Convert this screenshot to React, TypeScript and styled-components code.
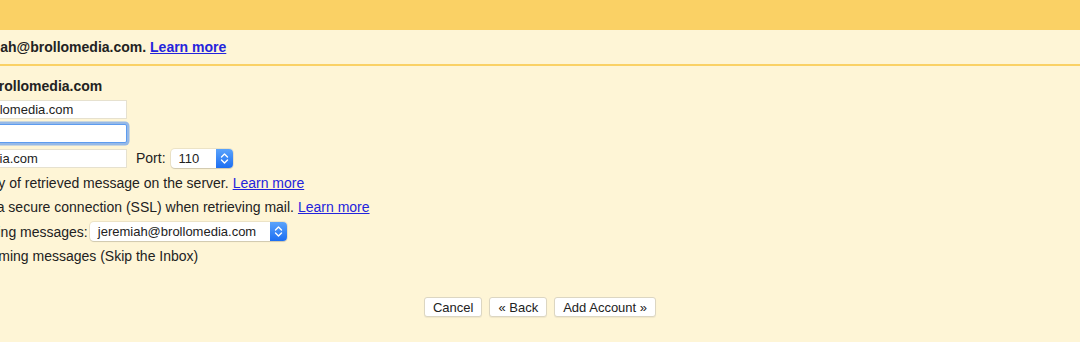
import styled, { createGlobalStyle } from "styled-components";

const GlobalStyle = createGlobalStyle`
  html, body {
    margin: 0;
    padding: 0;
    background: #fef5d6;
  }
  body {
    font-family: "Liberation Sans", Arial, sans-serif;
    color: #222;
  }
`;

const colors = {
  gold: "#fad165",
  cream: "#fef5d6",
  text: "#222222",
  link: "#2424dc",
};

const Chevrons = () => (
  <svg width="9" height="13" viewBox="0 0 9 13" fill="none">
    <path d="M1.5 5 L4.5 2 L7.5 5" stroke="#fff" strokeWidth="1.4" strokeLinecap="round" strokeLinejoin="round" />
    <path d="M1.5 8 L4.5 11 L7.5 8" stroke="#fff" strokeWidth="1.4" strokeLinecap="round" strokeLinejoin="round" />
  </svg>
);

const Select = ({ value, width, gap }: { value: string; width: number; gap: number }) => (
  <SelectBox $width={width} $gap={gap}>
    <span>{value}</span>
    <Stepper>
      <Chevrons />
    </Stepper>
  </SelectBox>
);

const App = () => {
  return (
    <Page>
      <GlobalStyle />
      <TopBand />

      <Notice>
        <NoticeText>
          jeremiah@brollomedia.com. <Link href="#">Learn more</Link>
        </NoticeText>
      </Notice>

      <Form>
        <Heading>jeremiah@brollomedia.com</Heading>

        <Label>Username:</Label>
        <Field>
          <Input defaultValue="jeremiah@brollomedia.com" />
        </Field>

        <Label>Password:</Label>
        <Field>
          <Input type="password" $focused />
        </Field>

        <Label>POP Server:</Label>
        <Field>
          <Input defaultValue="mail.brollomedia.com" />
          <Inline>Port:</Inline>
          <Select value="110" width={62} gap={0} />
        </Field>

        <Field>
          <Check type="checkbox" />
          Leave a copy of retrieved message on the server. <Link href="#">Learn more</Link>
        </Field>

        <Field>
          <Check type="checkbox" />
          Always use a secure connection (SSL) when retrieving mail. <Link href="#">Learn more</Link>
        </Field>

        <Field>
          <Check type="checkbox" />
          Label incoming messages:
          <Select value="jeremiah@brollomedia.com" width={197} gap={2} />
        </Field>

        <Field>
          <Check type="checkbox" />
          Archive incoming messages (Skip the Inbox)
        </Field>
      </Form>

      <Actions>
        <Button>Cancel</Button>
        <Button>« Back</Button>
        <Button>Add Account »</Button>
      </Actions>
    </Page>
  );
};

export default App;

const Page = styled.div`
  width: 1080px;
  height: 342px;
  overflow: hidden;
  background: ${colors.cream};
  font-size: 14px;
`;

const TopBand = styled.div`
  height: 30px;
  background: ${colors.gold};
`;

const Notice = styled.div`
  height: 34px;
  display: flex;
  align-items: center;
  border-bottom: 2px solid ${colors.gold};
  font-weight: bold;
`;

const NoticeText = styled.div`
  margin-left: -41px;
  white-space: nowrap;
`;

const Link = styled.a`
  color: ${colors.link};
  text-decoration: underline;
`;

const Form = styled.div`
  display: grid;
  grid-template-columns: 200px 900px;
  grid-template-rows: 22px;
  grid-auto-rows: 24.5px;
  margin: 9px 0 0 -291px;
`;

const Heading = styled.div`
  grid-column: 2;
  line-height: 22px;
  font-weight: bold;
  margin-left: 10px;
  white-space: nowrap;
`;

const Label = styled.div`
  display: flex;
  align-items: center;
  justify-content: flex-end;
  padding-right: 8px;
`;

const Field = styled.div`
  grid-column: 2;
  display: flex;
  align-items: center;
  white-space: nowrap;

  a {
    margin-left: 4px;
  }
`;

const Input = styled.input<{ $focused?: boolean }>`
  box-sizing: border-box;
  width: 218px;
  height: 19px;
  margin: 0;
  padding: 0 3px 0 5px;
  font-family: "Liberation Sans", Arial, sans-serif;
  font-size: 13px;
  color: ${colors.text};
  background: #fff;
  border: 1px solid ${(p) => (p.$focused ? "#5d9cef" : "#e6e1cf")};
  border-radius: ${(p) => (p.$focused ? "2px" : "0")};
  outline: none;
  box-shadow: ${(p) =>
    p.$focused ? "0 0 0 2.5px rgba(105, 160, 238, 0.7)" : "none"};
`;

const Inline = styled.span`
  margin: 0 5px 0 9px;
`;

const SelectBox = styled.div<{ $width: number; $gap: number }>`
  box-sizing: border-box;
  width: ${(p) => p.$width}px;
  height: 19px;
  display: flex;
  align-items: center;
  justify-content: space-between;
  margin-left: ${(p) => p.$gap}px;
  padding-left: 8px;
  background: #fff;
  border-radius: 4px;
  box-shadow: 0 0 0 1px rgba(0, 0, 0, 0.07), 0 1px 1px rgba(0, 0, 0, 0.12);
  font-size: 13px;
  color: ${colors.text};
`;

const Stepper = styled.div`
  width: 17px;
  height: 19px;
  display: flex;
  align-items: center;
  justify-content: center;
  border-radius: 0 4px 4px 0;
  background: linear-gradient(#5aa3fb, #1c6ef2);
`;

const Check = styled.input`
  width: 13px;
  height: 13px;
  margin: 0;
`;

const Actions = styled.div`
  display: flex;
  justify-content: center;
  gap: 7px;
  margin-top: 28.5px;
`;

const Button = styled.button`
  box-sizing: border-box;
  height: 20px;
  padding: 0 8px;
  font-family: "Liberation Sans", Arial, sans-serif;
  font-size: 13px;
  color: ${colors.text};
  background: #fff;
  border: 1px solid #dcd6c2;
  border-radius: 3px;
  box-shadow: 0 1px 1px rgba(0, 0, 0, 0.06);
`;
